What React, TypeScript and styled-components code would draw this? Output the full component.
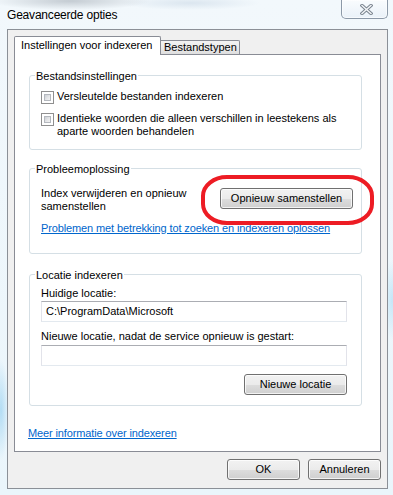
import React from "react";
import styled, { createGlobalStyle } from "styled-components";

const GlobalStyle = createGlobalStyle`
  *, *::before, *::after { box-sizing: border-box; }
  html, body { margin: 0; padding: 0; }
  body {
    width: 393px;
    height: 495px;
    overflow: hidden;
    font-family: "Liberation Sans", Arial, sans-serif;
    font-size: 11px;
    line-height: 13px;
    color: #000;
  }
  #root { width: 393px; height: 495px; }
`;

const Window = styled.div`
  position: relative;
  width: 393px;
  height: 495px;
  display: flex;
  flex-direction: column;
  overflow: hidden;
  background:
    radial-gradient(ellipse 80px 9px at 70px 1px, rgba(110, 120, 132, 0.35), transparent),
    radial-gradient(ellipse 70px 7px at 190px 3px, rgba(150, 175, 200, 0.25), transparent),
    radial-gradient(ellipse 8px 50px at 1px 410px, rgba(110, 190, 235, 0.45), transparent),
    radial-gradient(ellipse 8px 40px at 392px 300px, rgba(120, 200, 240, 0.35), transparent),
    linear-gradient(180deg, #f2f8fc 0%, #eaf5fb 100%);
`;

const TitleBar = styled.div`
  height: 29px;
  flex-shrink: 0;
  display: flex;
  justify-content: space-between;
  align-items: flex-start;
`;

const Title = styled.div`
  padding: 8px 0 0 7px;
  font-size: 12px;
  line-height: 15px;
  letter-spacing: -0.2px;
  color: #000;
  text-shadow: 0 0 6px rgba(255, 255, 255, 0.95);
`;

const CloseButton = styled.div`
  width: 47px;
  height: 19px;
  margin-right: 5px;
  border: 1px solid #8c99a8;
  border-top: none;
  border-radius: 0 0 5px 5px;
  background: linear-gradient(180deg, rgba(255, 255, 255, 0.55), rgba(232, 240, 248, 0.8));
  box-shadow: inset 0 0 0 1px rgba(255, 255, 255, 0.6);
  display: flex;
  align-items: center;
  justify-content: center;
  padding-left: 3px;
`;

const Client = styled.div`
  flex: 1;
  margin: 0 5px 6px 7px;
  border: 1px solid #8b9097;
  background: #f0f0f0;
  padding: 6px 6px 0 6px;
  display: flex;
  flex-direction: column;
`;

const TabStrip = styled.div`
  height: 18px;
  display: flex;
  align-items: flex-end;
  position: relative;
  z-index: 1;
`;

const Tab = styled.div<{ $active?: boolean }>`
  border: 1px solid #898c95;
  border-bottom: none;
  white-space: nowrap;
  ${(p) =>
    p.$active
      ? `
    width: 147px;
    height: 19px;
    margin-bottom: -1px;
    padding: 2px 0 0 6px;
    background: #fff;
    border-radius: 2px 2px 0 0;
  `
      : `
    width: 79px;
    height: 14px;
    padding: 0 0 0 3px;
    border-left: none;
    background: linear-gradient(180deg, #f3f3f3 0%, #ebebeb 50%, #dedede 100%);
    border-radius: 0 2px 0 0;
  `}
`;

const Panel = styled.div`
  height: 398px;
  border: 1px solid #898c95;
  background: #fff;
  padding: 20px 18px 0 14px;
  display: flex;
  flex-direction: column;
`;

const GroupBox = styled.div<{ $pad: string; $mt?: number }>`
  position: relative;
  border: 1px solid #d5dfe5;
  border-radius: 3px;
  padding: ${(p) => p.$pad};
  margin-top: ${(p) => p.$mt ?? 0}px;
`;

const GroupTitle = styled.div`
  position: absolute;
  top: -6px;
  left: 5px;
  padding: 0 1px;
  background: #fff;
  line-height: 13px;
  white-space: nowrap;
`;

const CheckRow = styled.div<{ $mt?: number }>`
  display: flex;
  align-items: flex-start;
  margin-top: ${(p) => p.$mt ?? 0}px;
`;

const CheckBox = styled.span`
  position: relative;
  flex-shrink: 0;
  width: 13px;
  height: 13px;
  margin-top: 1px;
  margin-right: 3px;
  border: 1px solid #8f8f8f;
  background: #fff;
  &::after {
    content: "";
    position: absolute;
    inset: 2px;
    background: linear-gradient(135deg, #c3c7cd 0%, #e6e7e9 55%, #f7f7f7 100%);
    box-shadow: inset 0 0 0 1px #b4b8be;
  }
`;

const ProblemRow = styled.div`
  display: flex;
  align-items: flex-start;
`;

const ProblemText = styled.div`
  width: 160px;
`;

const WinButton = styled.div<{ $w: number }>`
  width: ${(p) => p.$w}px;
  height: 21px;
  border: 1px solid #707070;
  border-radius: 3px;
  background: linear-gradient(180deg, #f2f2f2 0%, #ebebeb 50%, #dddddd 51%, #cfcfcf 100%);
  box-shadow: inset 0 0 0 1px rgba(255, 255, 255, 0.75);
  display: flex;
  align-items: center;
  justify-content: center;
  white-space: nowrap;
  flex-shrink: 0;
`;

const RebuildButton = styled(WinButton)`
  margin: 1px 8px 0 auto;
`;

const LinkText = styled.span<{ $mt?: number; $ml?: number }>`
  display: block;
  color: #0066cc;
  text-decoration: underline;
  white-space: nowrap;
  letter-spacing: -0.12px;
  margin-top: ${(p) => p.$mt ?? 0}px;
  margin-left: ${(p) => p.$ml ?? 0}px;
`;

const Label = styled.div<{ $mt?: number }>`
  margin-top: ${(p) => p.$mt ?? 0}px;
  white-space: nowrap;
`;

const TextBox = styled.div<{ $mt?: number }>`
  width: 306px;
  height: 21px;
  margin-top: ${(p) => p.$mt ?? 0}px;
  border: 1px solid #e2e3ea;
  border-top-color: #abadb3;
  border-bottom-color: #e3e9ef;
  background: #fff;
  padding-left: 4px;
  display: flex;
  align-items: center;
  white-space: nowrap;
`;

const ButtonRight = styled.div`
  display: flex;
  justify-content: flex-end;
  margin-top: 8px;
  padding-right: 14px;
`;

const Footer = styled.div`
  display: flex;
  justify-content: flex-end;
  gap: 8px;
  margin-top: 7px;
`;

const Highlight = styled.svg`
  position: absolute;
  left: 169px;
  top: 4px;
  overflow: visible;
  pointer-events: none;
`;

export default function App() {
  return (
    <>
      <GlobalStyle />
      <Window>
        <TitleBar>
          <Title>Geavanceerde opties</Title>
          <CloseButton>
            <svg width="13" height="11" viewBox="0 0 13 11">
              <path d="M2 1.5 L11 9.5 M11 1.5 L2 9.5" stroke="#7b8590" strokeWidth="3.4" strokeLinecap="square" fill="none" />
              <path d="M2 1.5 L11 9.5 M11 1.5 L2 9.5" stroke="#f4f6f8" strokeWidth="1.4" strokeLinecap="square" fill="none" />
            </svg>
          </CloseButton>
        </TitleBar>
        <Client>
          <TabStrip>
            <Tab $active>Instellingen voor indexeren</Tab>
            <Tab>Bestandstypen</Tab>
          </TabStrip>
          <Panel>
            <GroupBox $pad="14px 4px 11px 11px">
              <GroupTitle>Bestandsinstellingen</GroupTitle>
              <CheckRow>
                <CheckBox />
                <span>Versleutelde bestanden indexeren</span>
              </CheckRow>
              <CheckRow $mt={8}>
                <CheckBox />
                <span>Identieke woorden die alleen verschillen in leestekens als aparte woorden behandelen</span>
              </CheckRow>
            </GroupBox>

            <GroupBox $pad="18px 0 18px 11px" $mt={18}>
              <GroupTitle>Probleemoplossing</GroupTitle>
              <ProblemRow>
                <ProblemText>Index verwijderen en opnieuw samenstellen</ProblemText>
                <RebuildButton $w={133}>Opnieuw samenstellen</RebuildButton>
              </ProblemRow>
              <LinkText $mt={9}>Problemen met betrekking tot zoeken en indexeren oplossen</LinkText>
              <Highlight width="178" height="55" viewBox="0 0 178 55">
                <rect x="4" y="4" width="169" height="46" rx="24" ry="19" fill="none" stroke="#ed1c24" strokeWidth="4" />
              </Highlight>
            </GroupBox>

            <GroupBox $pad="12px 0 10px 11px" $mt={20}>
              <GroupTitle>Locatie indexeren</GroupTitle>
              <Label>Huidige locatie:</Label>
              <TextBox $mt={1}>C:\ProgramData\Microsoft</TextBox>
              <Label $mt={8}>Nieuwe locatie, nadat de service opnieuw is gestart:</Label>
              <TextBox $mt={2} />
              <ButtonRight>
                <WinButton $w={103}>Nieuwe locatie</WinButton>
              </ButtonRight>
            </GroupBox>

            <LinkText $mt={21} $ml={-1}>Meer informatie over indexeren</LinkText>
          </Panel>
          <Footer>
            <WinButton $w={73}>OK</WinButton>
            <WinButton $w={73}>Annuleren</WinButton>
          </Footer>
        </Client>
      </Window>
    </>
  );
}
